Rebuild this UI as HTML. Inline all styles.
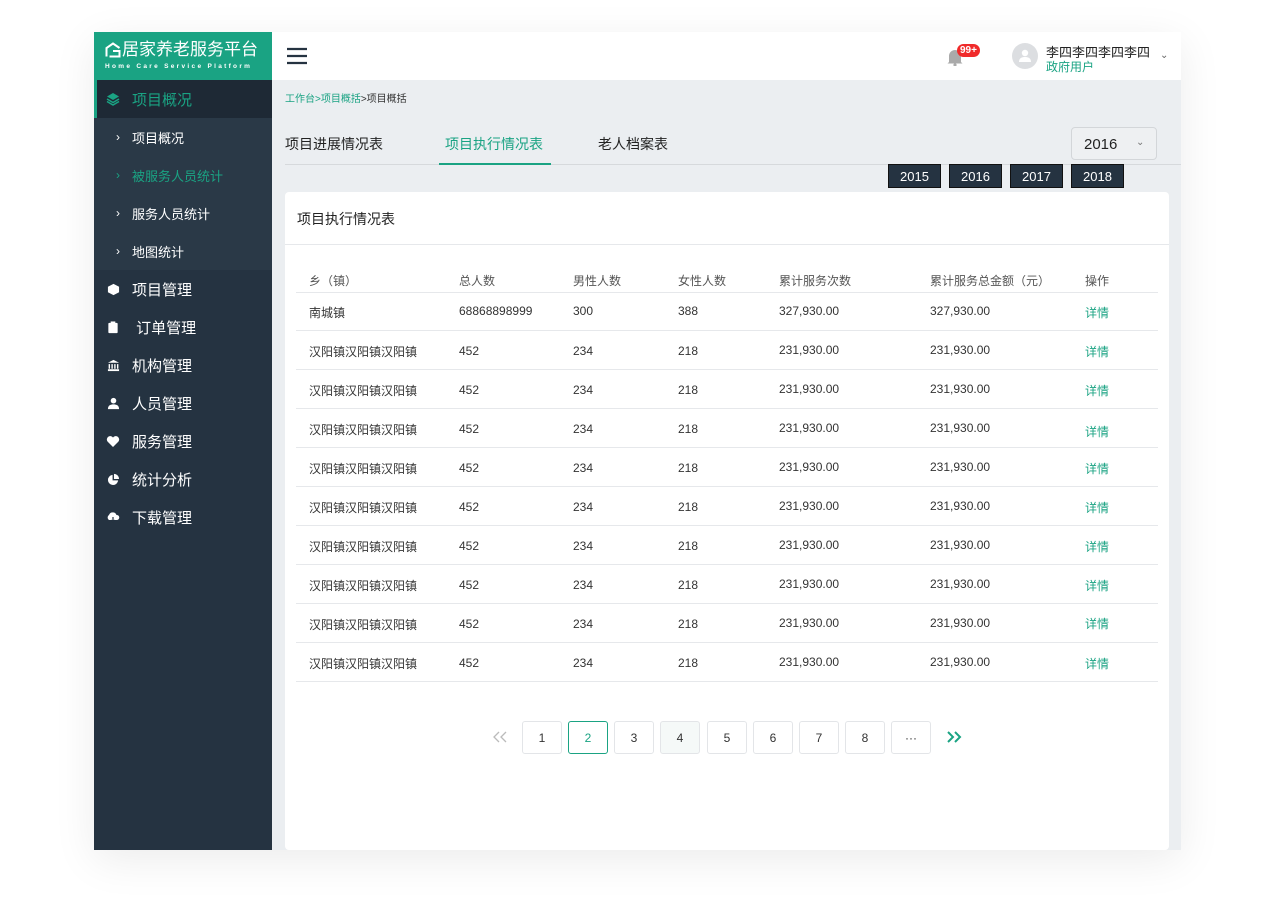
<!DOCTYPE html>
<html><head><meta charset="utf-8"><style>
*{margin:0;padding:0;box-sizing:border-box}
body{width:1274px;height:924px;background:#fff;font-family:"Liberation Sans","Noto Sans CJK SC",sans-serif;position:relative;overflow:hidden}
.frame{position:absolute;left:94px;top:32px;width:1087px;height:818px;background:#ebeef1;box-shadow:0 10px 40px rgba(0,0,0,.08)}
.side{position:absolute;left:94px;top:32px;width:178px;height:818px;background:#253341}
.logo{height:48px;background:#1aa383;color:#fff;position:relative}
.logo .t{position:absolute;left:28px;top:8px;font-size:17px;line-height:20px;white-space:nowrap}
.logo .s{position:absolute;left:11px;top:31px;font-size:6.5px;letter-spacing:2.3px;font-weight:bold;white-space:nowrap}
.mi{height:38px;display:flex;align-items:center;color:#fff;font-size:15px;padding-left:12px}
.mi .ic{width:14px;height:14px;margin-right:12px;display:inline-flex;align-items:center;justify-content:center;color:#fff;font-size:12px}
.act{background:#1e2935;color:#1aa383;border-left:3px solid #1aa383;padding-left:9px}
.sub{background:#2a3947}
.si{height:38px;display:flex;align-items:center;color:#fff;font-size:13px;padding-left:22px}
.si b{font-weight:normal;margin-right:12px;font-size:12px}
.si.on{color:#1aa383}
.hdr{position:absolute;left:272px;top:32px;width:909px;height:48px;background:#fff}
.abs{position:absolute;white-space:nowrap}
.card{position:absolute;left:285px;top:192px;width:884px;height:658px;background:#fff;border-radius:4px}
.row{position:absolute;left:296px;width:862px;border-bottom:1px solid #e6e8eb;font-size:12px;color:#333}
.row span{position:absolute;top:0}
.pg{position:absolute;top:721px;width:40px;height:33px;border:1px solid #e3e5e8;border-radius:3px;font-size:12px;color:#333;display:flex;align-items:center;justify-content:center;background:#fff}
.yb{position:absolute;top:164px;width:53px;height:24px;background:#253341;color:#fff;font-size:13px;display:flex;align-items:center;justify-content:center;border:1px solid #111}
</style></head><body>
<div class="frame"></div>
<div class="side">
 <div class="logo"><svg class="abs" style="left:11px;top:10px" width="16" height="16" viewBox="0 0 16 16"><path d="M1.5 14.5V6L8 1.5 14.5 6M4.5 14.5h10V9H8" stroke="#fff" stroke-width="2" fill="none"/></svg><div class="t">居家养老服务平台</div><div class="s">Home Care Service Platform</div></div>
 <div class="mi act"><span class="ic"><svg width="14" height="14" viewBox="0 0 14 14"><path d="M7 1L13 4.5 7 8 1 4.5Z" fill="#1aa383"/><path d="M1 7l6 3.5 6-3.5M1 9.5l6 3.5 6-3.5" stroke="#1aa383" stroke-width="1.5" fill="none"/></svg></span>项目概况</div>
 <div class="sub">
  <div class="si"><b>›</b>项目概况</div>
  <div class="si on"><b>›</b>被服务人员统计</div>
  <div class="si"><b>›</b>服务人员统计</div>
  <div class="si"><b>›</b>地图统计</div>
 </div>
 <div class="mi"><span class="ic"><svg width="13" height="13" viewBox="0 0 14 14"><path d="M7 1L13 4v6L7 13 1 10V4Z" fill="#fff"/></svg></span>项目管理</div>
 <div class="mi"><span class="ic"><svg width="12" height="13" viewBox="0 0 12 14"><rect x="1" y="2" width="10" height="11" rx="1" fill="#fff"/><rect x="3.5" y="0.5" width="5" height="3" fill="#fff"/></svg></span>&nbsp;订单管理</div>
 <div class="mi"><span class="ic"><svg width="13" height="13" viewBox="0 0 14 14"><path d="M7 1L13 4H1Z" fill="#fff"/><path d="M2.5 5.5v5M5.5 5.5v5M8.5 5.5v5M11.5 5.5v5" stroke="#fff" stroke-width="1.5"/><rect x="1" y="11" width="12" height="2" fill="#fff"/></svg></span>机构管理</div>
 <div class="mi"><span class="ic"><svg width="13" height="13" viewBox="0 0 14 14"><circle cx="7" cy="4" r="3" fill="#fff"/><path d="M1 13c0-4 3-5 6-5s6 1 6 5Z" fill="#fff"/></svg></span>人员管理</div>
 <div class="mi"><span class="ic"><svg width="14" height="13" viewBox="0 0 14 13"><path d="M7 12L1.5 6.5A3 3 0 017 2.5 3 3 0 0112.5 6.5Z" fill="#fff"/></svg></span>服务管理</div>
 <div class="mi"><span class="ic"><svg width="13" height="13" viewBox="0 0 14 14"><path d="M6 2A5.5 5.5 0 1012 8H6Z" fill="#fff"/><path d="M7.5 1v5.5H13A5.5 5.5 0 007.5 1Z" fill="#fff"/></svg></span>统计分析</div>
 <div class="mi"><span class="ic"><svg width="14" height="12" viewBox="0 0 14 12"><path d="M3 9A3 3 0 013 4a4 4 0 017.5 0A2.5 2.5 0 0111 9Z" fill="#fff"/><path d="M7 6v5M5 9l2 2 2-2" stroke="#253341" stroke-width="1.2" fill="none"/></svg></span>下载管理</div>
</div>
<div class="hdr">
 <svg class="abs" style="left:15px;top:15px" width="20" height="18"><path d="M0 2h20M0 9h20M0 16h20" stroke="#253341" stroke-width="2.2"/></svg>
 <svg class="abs" style="left:674px;top:16px" width="18" height="18" viewBox="0 0 18 18"><path d="M3 14V8a6 6 0 0112 0v6l1.5 1.5h-15Z" fill="#aaa"/><circle cx="9" cy="17" r="1.6" fill="#aaa"/></svg>
 <div class="abs" style="left:685px;top:12px;background:#f02a2a;color:#fff;font-size:10px;font-weight:bold;border-radius:7px;padding:0 3px;line-height:13px">99+</div>
 <div class="abs" style="left:740px;top:11px;width:26px;height:26px;border-radius:50%;background:#dcdee1"><svg width="26" height="26"><circle cx="13" cy="10" r="3.2" fill="#fff"/><path d="M7 19c0-4 3-5 6-5s6 1 6 5Z" fill="#fff"/></svg></div>
 <div class="abs" style="left:774px;top:10px;font-size:13px;color:#222">李四李四李四李四</div>
 <div class="abs" style="left:774px;top:26px;font-size:12px;color:#1aa383">政府用户</div>
 <div class="abs" style="left:888px;top:18px;font-size:10px;color:#666">⌄</div>
</div>
<div class="abs" style="left:285px;top:90px;font-size:10px;color:#1aa383">工作台&gt;项目概括<span style="color:#333">&gt;项目概括</span></div>
<div class="abs" style="left:285px;top:134px;font-size:14px;color:#222">项目进展情况表</div>
<div class="abs" style="left:445px;top:134px;font-size:14px;color:#1aa383">项目执行情况表</div>
<div class="abs" style="left:598px;top:134px;font-size:14px;color:#222">老人档案表</div>
<div class="abs" style="left:285px;top:164px;width:896px;height:1px;background:#d6d9dc"></div>
<div class="abs" style="left:439px;top:163px;width:112px;height:2px;background:#1aa383"></div>
<div class="abs" style="left:1071px;top:127px;width:86px;height:33px;border:1px solid #d3d6d9;border-radius:4px;background:#eef0f2;font-size:15px;color:#222;padding:8px 0 0 12px">2016<span style="position:absolute;left:64px;top:9px;font-size:10px;color:#777">⌄</span></div>
<div class="yb" style="left:888px">2015</div><div class="yb" style="left:949px">2016</div><div class="yb" style="left:1010px">2017</div><div class="yb" style="left:1071px">2018</div>
<div class="card">
 <div class="abs" style="left:12px;top:17px;font-size:14px;color:#222">项目执行情况表</div>
 <div class="abs" style="left:0;top:52px;width:884px;height:1px;background:#e6e8eb"></div>
</div>
<div class="row" style="top:272px;height:21px;color:#555"><span style="left:13px">乡（镇）</span><span style="left:163px">总人数</span><span style="left:277px">男性人数</span><span style="left:382px">女性人数</span><span style="left:483px">累计服务次数</span><span style="left:634px">累计服务总金额（元）</span><span style="left:789px">操作</span></div>
<div class="row" style="top:293px;height:38px"><span style="left:13px;top:11px">南城镇</span><span style="left:163px;top:11px">68868898999</span><span style="left:277px;top:11px">300</span><span style="left:382px;top:11px">388</span><span style="left:483px;top:11px">327,930.00</span><span style="left:634px;top:11px">327,930.00</span><span style="left:789px;top:11px;color:#1aa383">详情</span></div>
<div class="row" style="top:331px;height:39px"><span style="left:13px;top:12px">汉阳镇汉阳镇汉阳镇</span><span style="left:163px;top:13px">452</span><span style="left:277px;top:13px">234</span><span style="left:382px;top:13px">218</span><span style="left:483px;top:12px">231,930.00</span><span style="left:634px;top:12px">231,930.00</span><span style="left:789px;top:12px;color:#1aa383">详情</span></div>
<div class="row" style="top:370px;height:39px"><span style="left:13px;top:12px">汉阳镇汉阳镇汉阳镇</span><span style="left:163px;top:13px">452</span><span style="left:277px;top:13px">234</span><span style="left:382px;top:13px">218</span><span style="left:483px;top:12px">231,930.00</span><span style="left:634px;top:12px">231,930.00</span><span style="left:789px;top:12px;color:#1aa383">详情</span></div>
<div class="row" style="top:409px;height:39px"><span style="left:13px;top:12px">汉阳镇汉阳镇汉阳镇</span><span style="left:163px;top:13px">452</span><span style="left:277px;top:13px">234</span><span style="left:382px;top:13px">218</span><span style="left:483px;top:12px">231,930.00</span><span style="left:634px;top:12px">231,930.00</span><span style="left:789px;top:14px;color:#1aa383">详情</span></div>
<div class="row" style="top:448px;height:39px"><span style="left:13px;top:12px">汉阳镇汉阳镇汉阳镇</span><span style="left:163px;top:13px">452</span><span style="left:277px;top:13px">234</span><span style="left:382px;top:13px">218</span><span style="left:483px;top:12px">231,930.00</span><span style="left:634px;top:12px">231,930.00</span><span style="left:789px;top:12px;color:#1aa383">详情</span></div>
<div class="row" style="top:487px;height:39px"><span style="left:13px;top:12px">汉阳镇汉阳镇汉阳镇</span><span style="left:163px;top:13px">452</span><span style="left:277px;top:13px">234</span><span style="left:382px;top:13px">218</span><span style="left:483px;top:12px">231,930.00</span><span style="left:634px;top:12px">231,930.00</span><span style="left:789px;top:12px;color:#1aa383">详情</span></div>
<div class="row" style="top:526px;height:39px"><span style="left:13px;top:12px">汉阳镇汉阳镇汉阳镇</span><span style="left:163px;top:13px">452</span><span style="left:277px;top:13px">234</span><span style="left:382px;top:13px">218</span><span style="left:483px;top:12px">231,930.00</span><span style="left:634px;top:12px">231,930.00</span><span style="left:789px;top:12px;color:#1aa383">详情</span></div>
<div class="row" style="top:565px;height:39px"><span style="left:13px;top:12px">汉阳镇汉阳镇汉阳镇</span><span style="left:163px;top:13px">452</span><span style="left:277px;top:13px">234</span><span style="left:382px;top:13px">218</span><span style="left:483px;top:12px">231,930.00</span><span style="left:634px;top:12px">231,930.00</span><span style="left:789px;top:12px;color:#1aa383">详情</span></div>
<div class="row" style="top:604px;height:39px"><span style="left:13px;top:12px">汉阳镇汉阳镇汉阳镇</span><span style="left:163px;top:13px">452</span><span style="left:277px;top:13px">234</span><span style="left:382px;top:13px">218</span><span style="left:483px;top:12px">231,930.00</span><span style="left:634px;top:12px">231,930.00</span><span style="left:789px;top:11px;color:#1aa383">详情</span></div>
<div class="row" style="top:643px;height:39px"><span style="left:13px;top:12px">汉阳镇汉阳镇汉阳镇</span><span style="left:163px;top:13px">452</span><span style="left:277px;top:13px">234</span><span style="left:382px;top:13px">218</span><span style="left:483px;top:12px">231,930.00</span><span style="left:634px;top:12px">231,930.00</span><span style="left:789px;top:12px;color:#1aa383">详情</span></div>
<svg class="abs" style="left:492px;top:731px" width="16" height="12"><path d="M7 1L2 6l5 5M14 1L9 6l5 5" stroke="#bbb" stroke-width="1.3" fill="none"/></svg>
<div class="pg" style="left:522px">1</div>
<div class="pg" style="left:568px;border-color:#1aa383;color:#1aa383">2</div>
<div class="pg" style="left:614px">3</div>
<div class="pg" style="left:660px;background:#f5f9f8">4</div>
<div class="pg" style="left:707px">5</div>
<div class="pg" style="left:753px">6</div>
<div class="pg" style="left:799px">7</div>
<div class="pg" style="left:845px">8</div>
<div class="pg" style="left:891px">···</div>
<svg class="abs" style="left:946px;top:731px" width="16" height="12"><path d="M2 1l5 5-5 5M9 1l5 5-5 5" stroke="#1aa383" stroke-width="2" fill="none"/></svg>
</body></html>
